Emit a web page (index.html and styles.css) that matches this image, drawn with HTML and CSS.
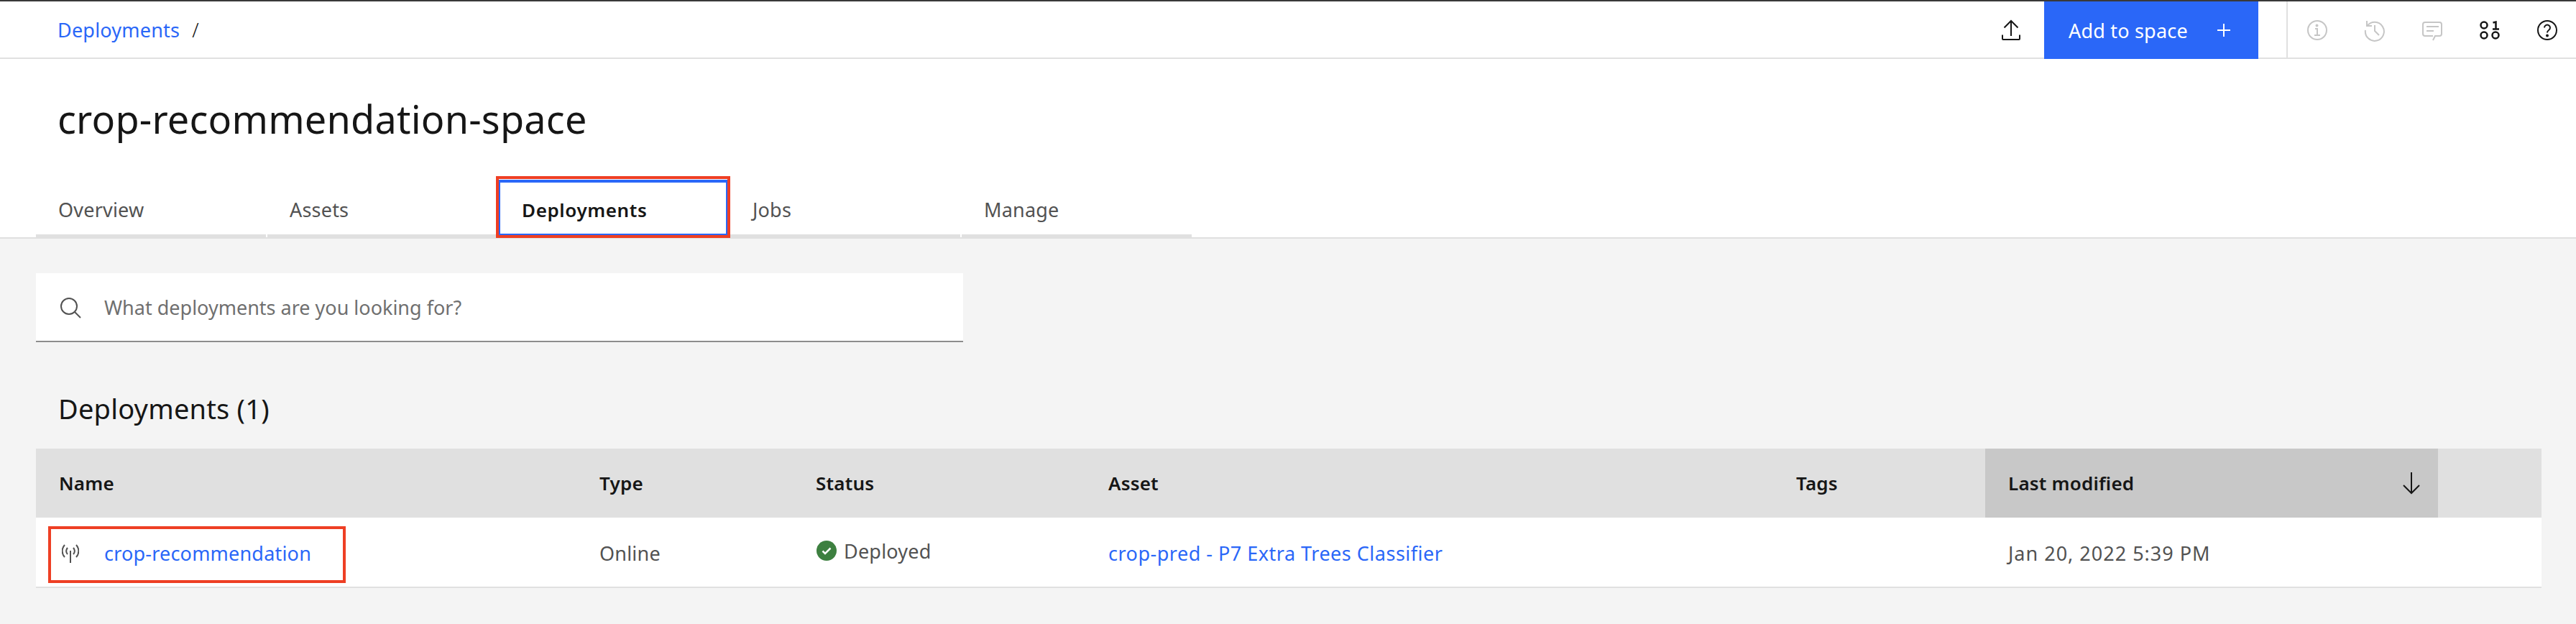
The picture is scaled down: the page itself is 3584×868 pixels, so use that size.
FILE: index.html
```html
<!DOCTYPE html>
<html lang="en">
<head>
    <meta charset="UTF-8">
    <title>crop-recommendation-space</title>
    <link rel="stylesheet" href="styles.css">
</head>
<body>
<div id="topbar">
    <div class="crumbs"><a class="link">Deployments</a><span class="slash">/</span></div>
    <div class="actions">
        <div class="export">
            <svg width="26" height="30" viewBox="0 0 26 30" fill="none" stroke="#161616" stroke-width="2"><path d="M13 2V23M3.500 11.500L13 2l9.500 9.500M1 21.500V27a1 1 0 0 0 1 1h22a1 1 0 0 0 1-1v-5.500"/></svg>
        </div>
        <div class="add-btn">
            <span>Add to space</span>
            <svg class="plus" width="20" height="20" viewBox="0 0 20 20" stroke="#fff" stroke-width="2"><path d="M10 1v18M1 10h18"/></svg>
        </div>
        <div class="tools">
            <svg class="tool" width="32" height="32" viewBox="0 0 32 32" fill="none" stroke="#c6c6c6" stroke-width="2"><circle cx="16" cy="16" r="13"/><path d="M13 14h3v9M12 23h8"/><circle cx="15.500" cy="9.500" r="1" fill="#c6c6c6"/></svg>
            <svg class="tool" width="32" height="32" viewBox="0 0 32 32" fill="none" stroke="#c6c6c6" stroke-width="2"><path d="M5 3v7h7M5.500 10A13 13 0 1 1 3 16M16 9v8l6 6"/></svg>
            <svg class="tool" width="32" height="32" viewBox="0 0 32 32" fill="none" stroke="#c6c6c6" stroke-width="2"><path d="M17 30l3-6h6a3 3 0 0 0 3-3V8a3 3 0 0 0-3-3H6a3 3 0 0 0-3 3v13a3 3 0 0 0 3 3h11M8 11h17M8 17h10"/></svg>
            <svg class="tool" width="32" height="32" viewBox="0 0 32 32" fill="none" stroke="#161616" stroke-width="2.500"><circle cx="8" cy="9" r="4.500"/><circle cx="8" cy="23" r="4.500"/><circle cx="24" cy="23" r="4.500"/><path d="M20.500 5.500L24.500 4.500V14M20 14.500h9"/></svg>
            <svg class="tool" width="32" height="32" viewBox="0 0 32 32" fill="none" stroke="#161616" stroke-width="2"><circle cx="16" cy="16" r="13"/><path d="M12 12.500a4 4 0 1 1 6 3.500c-1.500 1-2 1.500-2 3.500"/><circle cx="16" cy="23.500" r="1" fill="#161616"/></svg>
        </div>
    </div>
</div>
<div id="head">
    <h1>crop-recommendation-space</h1>
    <ul id="tabs">
        <li>Overview</li>
        <li>Assets</li>
        <li class="selected">Deployments</li>
        <li>Jobs</li>
        <li>Manage</li>
    </ul>
</div>
<div id="content">
    <div class="search">
        <svg width="32" height="32" viewBox="0 0 32 32" fill="none" stroke="#525252" stroke-width="2"><circle cx="14" cy="15" r="11"/><path d="M22 23l8 8"/></svg>
        <span>What deployments are you looking for?</span>
    </div>
    <h2>Deployments (1)</h2>
    <div class="table">
        <div class="row th">
            <div class="c-name">Name</div>
            <div class="c-type">Type</div>
            <div class="c-status">Status</div>
            <div class="c-asset">Asset</div>
            <div class="c-tags">Tags</div>
            <div class="c-date sorted">Last modified
                <svg width="26" height="32" viewBox="0 0 26 32" fill="none" stroke="#161616" stroke-width="2"><path d="M13 1v29M2 19l11 11 11-11"/></svg>
            </div>
        </div>
        <div class="row td">
            <div class="c-name name-cell">
                <svg width="24" height="28" viewBox="0 0 24 28" fill="none" stroke="#525252" stroke-width="2"><path d="M12 11v17M8 7c-2.500 3-2.500 6 0 9M16 7c2.500 3 2.500 6 0 9M4 3c-4.500 5-4.500 12 0 17M20 3c4.500 5 4.500 12 0 17"/></svg>
                <a class="link">crop-recommendation</a>
            </div>
            <div class="c-type">Online</div>
            <div class="c-status status-cell">
                <svg width="28" height="28" viewBox="0 0 28 28"><circle cx="14" cy="14" r="14" fill="#3d8040"/><path d="M8.500 14.500l3.500 3.500 7.500-7.500" fill="none" stroke="#fff" stroke-width="2.500"/></svg>
                <span>Deployed</span>
            </div>
            <div class="c-asset"><a class="link asset-link">crop-pred - P7 Extra Trees Classifier</a></div>
            <div class="c-tags"></div>
            <div class="c-date date-cell">Jan 20, 2022 5:39 PM</div>
            <div class="mark"></div>
        </div>
    </div>
</div>
</body>
</html>
```

FILE: styles.css
```css
*{
    margin:0;
    padding:0;
    box-sizing:border-box;
}
html, body{
    height:868px;
    overflow:hidden;
}
body{
    background:#fff;
    color:#161616;
    font-family:"Noto Sans", "Open Sans", sans-serif;
    font-size:27px;
    letter-spacing:.2px;
}
li{
    list-style:none;
}
.link{
    color:#2a67f8;
}
#topbar{
    height:82px;
    border-top:2px solid #393939;
    border-bottom:2px solid #e0e0e0;
    display:flex;
    justify-content:space-between;
}
.crumbs{
    padding-left:80px;
    display:flex;
    align-items:center;
    gap:17px;
    height:78px;
}
.slash{
    font-weight:300;
}
.actions{
    display:flex;
    height:80px;
}
.export{
    width:64px;
    padding-right:28px;
    display:flex;
    align-items:center;
    justify-content:center;
}
.add-btn{
    width:298px;
    background:#2a67f8;
    color:#fff;
    padding-left:34px;
    display:flex;
    align-items:center;
}
.plus{
    margin-left:40px;
}
.tools{
    margin-left:39px;
    width:403px;
    border-left:2px solid #e0e0e0;
    display:flex;
    align-items:center;
    padding-left:25px;
    gap:48px;
}
#head{
    height:250px;
    border-bottom:2px solid #e0e0e0;
    position:relative;
}
h1{
    font-size:54px;
    font-weight:400;
    padding:50px 0 0 80px;
    line-height:66px;
    letter-spacing:.2px;
}
#tabs{
    display:flex;
    align-items:flex-start;
    gap:2px;
    padding-left:50px;
    position:absolute;
    left:0;
    bottom:-2px;
}
#tabs li{
    width:320px;
    height:80px;
    padding-left:31px;
    color:#525252;
    border-bottom:6px solid #e0e0e0;
    line-height:80px;
}
#tabs .selected{
    position:relative;
    width:318px;
    height:77px;
    margin:-2px 2px 0 0;
    padding-left:30px;
    background:#fff;
    color:#161616;
    font-size:26px;
    font-weight:600;
    letter-spacing:.6px;
    line-height:76px;
    border:2px solid #2a67f8;
    border-top-width:4px;
}
#tabs .selected::after{
    content:"";
    position:absolute;
    left:-6px;
    right:-6px;
    top:-9px;
    bottom:-6px;
    border:4px solid #ee3f24;
}
#content{
    background:#f4f4f4;
    height:536px;
    padding:48px 48px 0 50px;
}
.search{
    width:1290px;
    height:96px;
    background:#fff;
    border-bottom:2px solid #8d8d8d;
    display:flex;
    align-items:center;
    gap:31px;
    padding-left:32px;
    color:#6f6f6f;
    letter-spacing:0;
}
h2{
    font-size:38px;
    font-weight:400;
    padding:67px 0 0 31px;
    height:148px;
    line-height:50px;
}
.row{
    display:flex;
    height:96px;
    align-items:center;
    position:relative;
}
.th{
    background:#e0e0e0;
    font-size:26px;
    font-weight:600;
}
.td{
    background:#fff;
    height:98px;
    padding-top:2px;
    border-bottom:2px solid #e0e0e0;
    color:#525252;
}
.row > div{
    padding-left:32px;
}
.c-name{ width:752px; }
.c-type{ width:301px; }
.c-status{ width:407px; }
.c-asset{ width:957px; }
.c-tags{ width:295px; }
.c-date{ width:630px; }
.sorted{
    background:#c8c8c8;
    height:96px;
    display:flex;
    align-items:center;
    justify-content:space-between;
    padding-right:24px;
}
.row > .name-cell{
    display:flex;
    align-items:center;
    gap:35px;
    padding-left:36px;
}
.mark{
    position:absolute;
    left:17px;
    top:12px;
    width:414px;
    height:79px;
    border:4px solid #ee3f24;
}
.status-cell{
    display:flex;
    align-items:center;
    gap:10px;
    margin-top:-6px;
}
.status-cell svg{
    margin-left:1px;
}
.asset-link{
    letter-spacing:.5px;
}
.date-cell{
    letter-spacing:1px;
}
```
